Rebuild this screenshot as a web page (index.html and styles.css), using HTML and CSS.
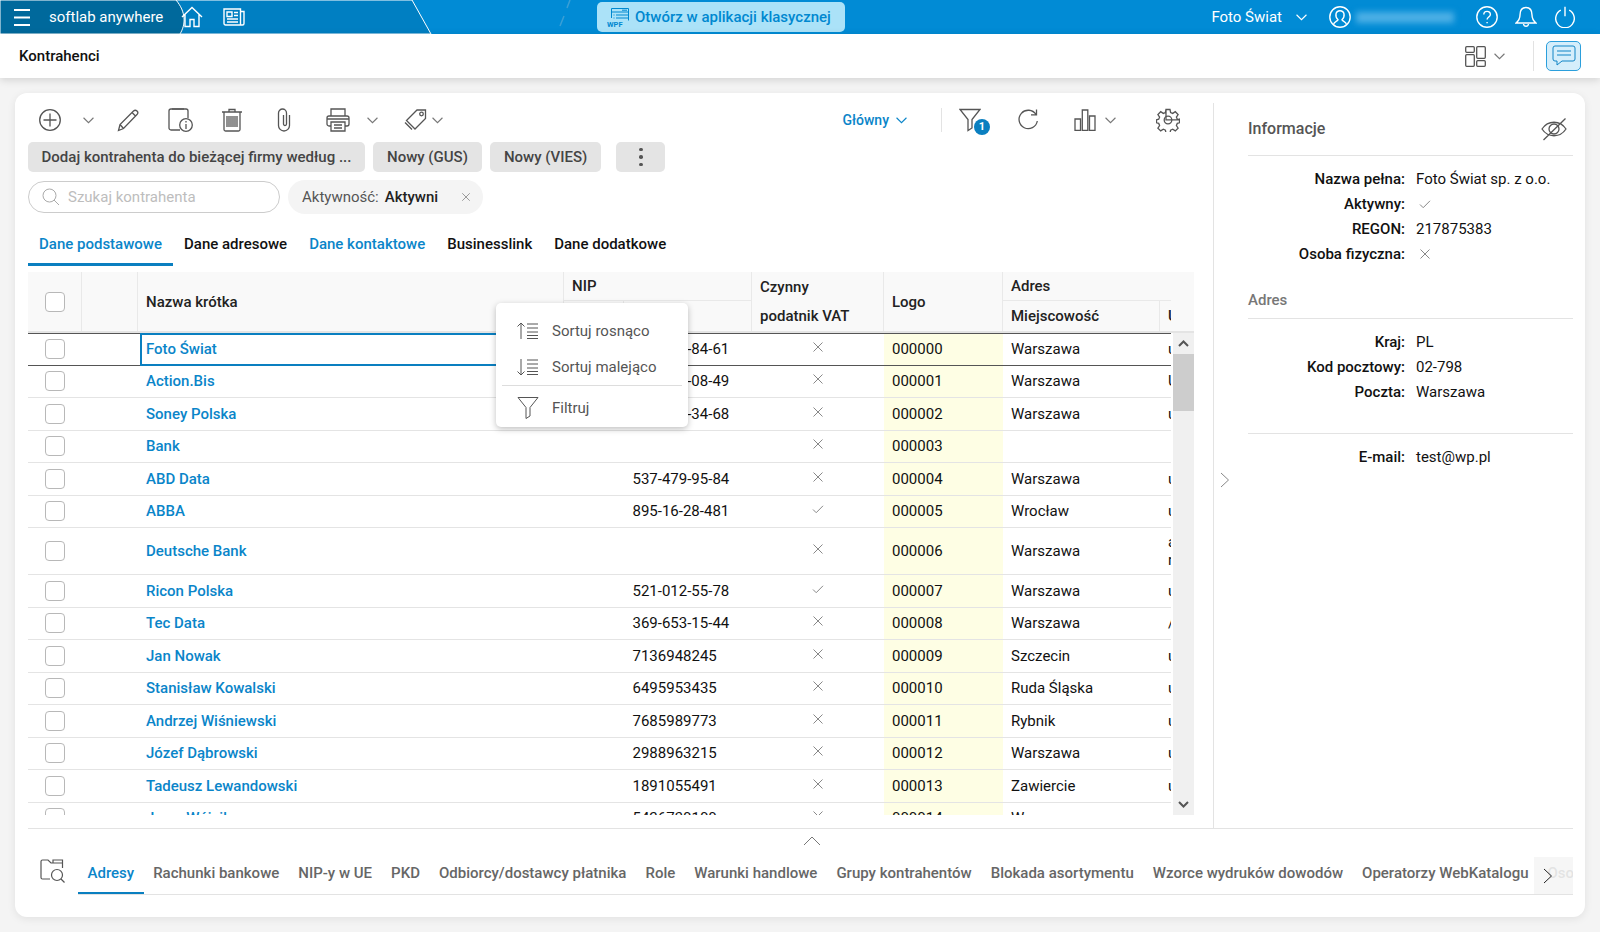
FILE: index.html
```html
<!DOCTYPE html>
<html lang="pl">
<head>
<meta charset="utf-8">
<title>Kontrahenci</title>
<link rel="stylesheet" href="styles.css">
</head>
<body>
<svg class="sprite" width="0" height="0" aria-hidden="true">
  <symbol id="x" viewBox="0 0 12 12"><path d="M1.5 1.5l9 9M10.5 1.5l-9 9"/></symbol>
  <symbol id="v" viewBox="0 0 12 12"><path d="M1 6.5l3.2 3.2L11 2.8"/></symbol>
  <symbol id="chev" viewBox="0 0 10 6"><path d="M.5.5L5 5 9.5.5"/></symbol>
  <symbol id="filter" viewBox="0 0 22 24"><path d="M1 1.5h20l-8 10v8.5l-4 2.5v-11z"/></symbol>
</svg>

<header class="topbar">
  <svg class="topbar-bg" width="600" height="34" viewBox="0 0 600 34" aria-hidden="true">
    <path fill="#007fc2" d="M0 0H412L431 34H0z"/>
    <path fill="#00699c" d="M0 0H176C186 12 186 24 180 34H0z"/>
    <path fill="none" stroke="#3a9fd6" stroke-width="1.5" d="M570 0l-3 8M564 16l-4 10"/>
  </svg>
  <div class="tb-left">
    <svg class="ic-burger" width="16" height="17" viewBox="0 0 16 17"><path d="M0 1h16M0 8.500h16M0 16h16"/></svg>
    <span class="brand">softlab anywhere</span>
    <svg class="ic-wh ic-home" width="22" height="22" viewBox="0 0 22 22"><path d="M1 11L11 1.500 21 11M4 8.500V20.500H9V13.500H13V20.500H18V8.500"/></svg>
    <svg class="ic-wh ic-news" width="22" height="18" viewBox="0 0 22 18"><path d="M1 1h16.500v16H2.500A1.500 1.500 0 0 1 1 15.500zM17.500 3.500H21V15.500A1.500 1.500 0 0 1 19.500 17H17.500M4 4h5v4.500H4zM11 4.500h4M11 7.500h4M4 11h11M4 14h11"/></svg>
  </div>
  <button class="classic">
    <svg width="23" height="20" viewBox="0 0 23 20"><path class="wpf-line" d="M4.500 11V1.500h17V13.500M4.500 5h17M15 3.200h5M9 8h12M9 11h12M6.500 8h1M6.500 11h1"/><text x="0" y="19.500" class="wpf-text">WPF</text></svg>
    <span>Otwórz w aplikacji klasycznej</span>
  </button>
  <div class="tb-right">
    <span class="firm">Foto Świat</span>
    <svg class="ic-chev-w" width="11" height="7"><use href="#chev"/></svg>
    <svg class="ic-wh ic-user" width="22" height="22" viewBox="0 0 22 22"><circle cx="11" cy="11" r="10.200"/><path d="M4.500 18.500c.5-3 4-3 4.500-4.800-3.500-3.500-2.500-9 2-9s5.500 5.500 2 9c.5 1.800 4 1.800 4.500 4.800"/></svg>
    <span class="blurred"></span>
    <svg class="ic-wh ic-help" width="22" height="22" viewBox="0 0 22 22"><circle cx="11" cy="11" r="10.200"/><path d="M7.800 8.500c0-4.200 6.600-4.200 6.600 0 0 2.500-3.300 2.500-3.300 5M11.100 16v1.200"/></svg>
    <svg class="ic-wh ic-bell" width="22" height="22" viewBox="0 0 22 22"><path d="M11 1.500c-4.500 0-6 3.500-6 7.500 0 4-1.500 6-4 8h20c-2.500-2-4-4-4-8 0-4-1.500-7.500-6-7.500zM8.500 18c.5 3 4.500 3 5 0"/></svg>
    <svg class="ic-wh ic-power" width="20" height="22" viewBox="0 0 20 22"><path d="M5.800 4.200a9.300 9.300 0 1 0 8.400 0M10 .8v9.500"/></svg>
  </div>
</header>

<div class="subbar">
  <h1 class="page-title">Kontrahenci</h1>
  <div class="sub-right">
    <svg class="ic ic-layout" width="21" height="21" viewBox="0 0 21 21"><rect x=".7" y=".7" width="8.600" height="5.600" rx="1"/><rect x=".7" y="8.700" width="8.600" height="11.600" rx="1"/><rect x="11.700" y=".7" width="8.600" height="11.600" rx="1"/><rect x="11.700" y="14.700" width="8.600" height="5.600" rx="1"/></svg>
    <svg class="ic-chev ml8" width="11" height="7"><use href="#chev"/></svg>
    <span class="sub-sep"></span>
    <button class="chat-btn" aria-label="Czat">
      <svg width="24" height="22" viewBox="0 0 24 22"><path d="M3 1h18a2 2 0 0 1 2 2v11a2 2 0 0 1-2 2H10l-5 4v-4H3a2 2 0 0 1-2-2V3a2 2 0 0 1 2-2zM5 6h14M5 10h14"/></svg>
    </button>
  </div>
</div>

<main class="card">
  <div class="card-main">
    <section class="list-pane">
      <div class="toolbar">
        <div class="tools-left">
          <svg class="ic" width="22" height="22" viewBox="0 0 22 22"><circle cx="11" cy="11" r="10.300"/><path d="M11 4.500v13M4.500 11h13"/></svg>
          <svg class="ic-chev" width="11" height="7"><use href="#chev"/></svg>
          <svg class="ic" width="22" height="23" viewBox="0 0 22 23"><path d="M1.500 21.500l1.500-6L16.500 2c1-1 2.500-1 3.500 0s1 2.500 0 3.500L6.500 19.500zM3 15.500l3.500 4M15 3.500l4 4"/></svg>
          <svg class="ic" width="25" height="24" viewBox="0 0 25 24"><path d="M12 22H3a2 2 0 0 1-2-2V3a2 2 0 0 1 2-2h15a2 2 0 0 1 2 2v7"/><path class="ic-blue" d="M4 1h12"/><circle cx="18" cy="17" r="6.300"/><path d="M18 16v5M18 13v1.500"/></svg>
          <svg class="ic" width="22" height="24" viewBox="0 0 22 24"><path d="M1 4h20M8 4V1.500h6V4M3 4v17.500A1.500 1.500 0 0 0 4.500 23h13a1.500 1.500 0 0 0 1.500-1.500V4M6 8v11M8 8v11M10 8v11M12 8v11M14 8v11M16 8v11"/></svg>
          <svg class="ic" width="14" height="24" viewBox="0 0 14 24"><path d="M12.500 7v10.500a5.500 5.500 0 0 1-11 0V5a4 4 0 0 1 8 0v11a1.500 1.500 0 0 1-3 0V7"/></svg>
          <svg class="ic" width="24" height="24" viewBox="0 0 24 24"><path d="M5 8V1h14v7M5 18H3a2 2 0 0 1-2-2v-6a2 2 0 0 1 2-2h18a2 2 0 0 1 2 2v6a2 2 0 0 1-2 2h-2M5 14h14v9H5zM8 17h8M8 20h8M1 11h22"/></svg>
          <svg class="ic-chev" width="11" height="7"><use href="#chev"/></svg>
          <svg class="ic ic-end" width="23" height="22" viewBox="0 0 23 22"><path d="M13 1h8.500v8.500L11 20 2.500 11.500zM1 13.500l7 7"/><circle cx="17.500" cy="5" r="1.800"/></svg>
          <svg class="ic-chev" width="11" height="7"><use href="#chev"/></svg>
        </div>
        <div class="tools-right">
          <span class="view-name">Główny</span>
          <svg class="ic-chev-blue ml7" width="11" height="7"><use href="#chev"/></svg>
          <span class="tool-sep"></span>
          <span class="filter-wrap">
            <svg class="ic ic-filter" width="22" height="24"><use href="#filter"/></svg>
            <span class="badge">1</span>
          </span>
          <svg class="ic ml34" width="22" height="22" viewBox="0 0 22 22"><path d="M19 5.500A9.200 9.200 0 1 0 20.300 12M14 5.800h5.500V.5"/></svg>
          <svg class="ic ml35" width="22" height="22" viewBox="0 0 22 22"><path d="M1 10h5.500v11.500H1zM8.300 1h5.500v20.500H8.300zM15.500 7H21v14.500h-5.500z"/></svg>
          <svg class="ic-chev ml9" width="11" height="7"><use href="#chev"/></svg>
          <svg class="ic ml40" width="24" height="24" viewBox="0 0 24 24"><circle cx="12" cy="12" r="3.800"/><path d="M10 1.500h4l.6 3 2.100.9 2.600-1.700 2.800 2.800-1.700 2.600.9 2.100 3 .6v0H10zM10 1.500l-.6 3-2.100.9-2.600-1.700-2.800 2.800 1.700 2.600-.9 2.100-2.200.6v3l2.200.6.9 2.100-1.700 2.600 2.800 2.800 2.600-1.700 2.100.9.600 3h4l.6-3 2.100-.9 2.600 1.700 2.800-2.800-1.700-2.600.9-2.100 2.200-.6V10.500" class="gear-fix"/></svg>
        </div>
      </div>

      <div class="actions">
        <button class="btn btn-wide">Dodaj kontrahenta do bieżącej firmy według ...</button>
        <button class="btn">Nowy (GUS)</button>
        <button class="btn">Nowy (VIES)</button>
        <button class="btn btn-more" aria-label="Więcej"><span></span><span></span><span></span></button>
      </div>

      <div class="search-row">
        <div class="search">
          <svg width="18" height="18" viewBox="0 0 18 18"><circle cx="7.500" cy="7.500" r="6.500"/><path d="M12 12l5 5"/></svg>
          <span>Szukaj kontrahenta</span>
        </div>
        <div class="chip">
          <span class="chip-label">Aktywność:</span>
          <strong>Aktywni</strong>
          <svg class="sv-x" width="10" height="10"><use href="#x"/></svg>
        </div>
      </div>

      <nav class="tabs">
        <a class="tab tab-on">Dane podstawowe</a>
        <a class="tab">Dane adresowe</a>
        <a class="tab tab-link">Dane kontaktowe</a>
        <a class="tab">Businesslink</a>
        <a class="tab">Dane dodatkowe</a>
      </nav>

      <div class="grid">
        <div class="ghead">
          <div class="gh gh-check"><span class="cb"></span></div>
          <div class="gh gh-blank"></div>
          <div class="gh gh-name">Nazwa krótka</div>
          <div class="gh gh-nip">NIP</div>
          <div class="gh gh-nip1"></div>
          <div class="gh gh-nip2"></div>
          <div class="gh gh-vat"><span>Czynny</span><span>podatnik VAT</span></div>
          <div class="gh gh-logo">Logo</div>
          <div class="gh gh-addr">Adres</div>
          <div class="gh gh-city">Miejscowość</div>
          <div class="gh gh-street">Ulica</div>
        </div>
        <div class="gbody">
          <div class="rows">
            <div class="row row-sel"><div class="c-check"><span class="cb"></span></div><div></div><div class="c-name c-focus">Foto Świat</div><div class="c-nip">521-301-84-61</div><div class="c-flag"><svg class="sv-x"><use href="#x"/></svg></div><div class="c-logo">000000</div><div class="c-city">Warszawa</div><div class="c-street">ul. Puławska</div></div>
            <div class="row"><div class="c-check"><span class="cb"></span></div><div></div><div class="c-name">Action.Bis</div><div class="c-nip">526-104-08-49</div><div class="c-flag"><svg class="sv-x"><use href="#x"/></svg></div><div class="c-logo">000001</div><div class="c-city">Warszawa</div><div class="c-street">Ul. Jana</div></div>
            <div class="row"><div class="c-check"><span class="cb"></span></div><div></div><div class="c-name">Soney Polska</div><div class="c-nip">527-020-34-68</div><div class="c-flag"><svg class="sv-x"><use href="#x"/></svg></div><div class="c-logo">000002</div><div class="c-city">Warszawa</div><div class="c-street">ul. Wołoska</div></div>
            <div class="row"><div class="c-check"><span class="cb"></span></div><div></div><div class="c-name">Bank</div><div class="c-nip"></div><div class="c-flag"><svg class="sv-x"><use href="#x"/></svg></div><div class="c-logo">000003</div><div class="c-city"></div><div class="c-street"></div></div>
            <div class="row"><div class="c-check"><span class="cb"></span></div><div></div><div class="c-name">ABD Data</div><div class="c-nip">537-479-95-84</div><div class="c-flag"><svg class="sv-x"><use href="#x"/></svg></div><div class="c-logo">000004</div><div class="c-city">Warszawa</div><div class="c-street">ul. Polna</div></div>
            <div class="row"><div class="c-check"><span class="cb"></span></div><div></div><div class="c-name">ABBA</div><div class="c-nip">895-16-28-481</div><div class="c-flag"><svg class="sv-v"><use href="#v"/></svg></div><div class="c-logo">000005</div><div class="c-city">Wrocław</div><div class="c-street">ul. Legnicka</div></div>
            <div class="row row-tall"><div class="c-check"><span class="cb"></span></div><div></div><div class="c-name">Deutsche Bank</div><div class="c-nip"></div><div class="c-flag"><svg class="sv-x"><use href="#x"/></svg></div><div class="c-logo">000006</div><div class="c-city">Warszawa</div><div class="c-street">al. Armii<br>róg Nowej</div></div>
            <div class="row"><div class="c-check"><span class="cb"></span></div><div></div><div class="c-name">Ricon Polska</div><div class="c-nip">521-012-55-78</div><div class="c-flag"><svg class="sv-v"><use href="#v"/></svg></div><div class="c-logo">000007</div><div class="c-city">Warszawa</div><div class="c-street">ul. Nowa</div></div>
            <div class="row"><div class="c-check"><span class="cb"></span></div><div></div><div class="c-name">Tec Data</div><div class="c-nip">369-653-15-44</div><div class="c-flag"><svg class="sv-x"><use href="#x"/></svg></div><div class="c-logo">000008</div><div class="c-city">Warszawa</div><div class="c-street">/ Lipowa</div></div>
            <div class="row"><div class="c-check"><span class="cb"></span></div><div></div><div class="c-name">Jan Nowak</div><div class="c-nip">7136948245</div><div class="c-flag"><svg class="sv-x"><use href="#x"/></svg></div><div class="c-logo">000009</div><div class="c-city">Szczecin</div><div class="c-street">ul. Długa</div></div>
            <div class="row"><div class="c-check"><span class="cb"></span></div><div></div><div class="c-name">Stanisław Kowalski</div><div class="c-nip">6495953435</div><div class="c-flag"><svg class="sv-x"><use href="#x"/></svg></div><div class="c-logo">000010</div><div class="c-city">Ruda Śląska</div><div class="c-street">ul. Górna</div></div>
            <div class="row"><div class="c-check"><span class="cb"></span></div><div></div><div class="c-name">Andrzej Wiśniewski</div><div class="c-nip">7685989773</div><div class="c-flag"><svg class="sv-x"><use href="#x"/></svg></div><div class="c-logo">000011</div><div class="c-city">Rybnik</div><div class="c-street">ul. Krótka</div></div>
            <div class="row"><div class="c-check"><span class="cb"></span></div><div></div><div class="c-name">Józef Dąbrowski</div><div class="c-nip">2988963215</div><div class="c-flag"><svg class="sv-x"><use href="#x"/></svg></div><div class="c-logo">000012</div><div class="c-city">Warszawa</div><div class="c-street">ul. Leśna</div></div>
            <div class="row"><div class="c-check"><span class="cb"></span></div><div></div><div class="c-name">Tadeusz Lewandowski</div><div class="c-nip">1891055491</div><div class="c-flag"><svg class="sv-x"><use href="#x"/></svg></div><div class="c-logo">000013</div><div class="c-city">Zawiercie</div><div class="c-street">ul. Polna</div></div>
            <div class="row"><div class="c-check"><span class="cb"></span></div><div></div><div class="c-name">Jerzy Wójcik</div><div class="c-nip">5426730100</div><div class="c-flag"><svg class="sv-x"><use href="#x"/></svg></div><div class="c-logo">000014</div><div class="c-city">Warszawa</div><div class="c-street">ul. Mała</div></div>
          </div>
          <div class="scrollbar">
            <svg class="sb-arrow" width="11" height="7" viewBox="0 0 11 7"><path d="M1 6l4.500-4.500L10 6"/></svg>
            <span class="sb-thumb"></span>
            <svg class="sb-arrow sb-down" width="11" height="7" viewBox="0 0 11 7"><path d="M1 1l4.500 4.500L10 1"/></svg>
          </div>
        </div>
      </div>

      <div class="menu">
        <div class="menu-item">
          <svg width="22" height="18" viewBox="0 0 22 18"><path d="M4 17V1M.5 4.500L4 1l3.500 3.500M10 2h11M10 6h11M10 10h11M10 13.500h11M10 16.500h11"/></svg>
          <span>Sortuj rosnąco</span>
        </div>
        <div class="menu-item">
          <svg width="22" height="18" viewBox="0 0 22 18"><path d="M4 1v16M.5 13.500L4 17l3.500-3.500M10 2h11M10 6h11M10 10h11M10 13.500h11M10 16.500h11"/></svg>
          <span>Sortuj malejąco</span>
        </div>
        <div class="menu-sep"></div>
        <div class="menu-item">
          <svg width="22" height="24" viewBox="0 0 22 24"><use href="#filter"/></svg>
          <span>Filtruj</span>
        </div>
      </div>
    </section>

    <aside class="info-pane">
      <svg class="pane-toggle" width="10" height="16" viewBox="0 0 10 16"><path d="M1 1l7.500 7L1 15"/></svg>
      <div class="info-head">
        <h2>Informacje</h2>
        <svg class="ic" width="26" height="24" viewBox="0 0 26 24"><path d="M1 12c6-9 18-9 24 0-6 9-18 9-24 0zM24.500 1.500L2.500 23"/><circle cx="13" cy="12" r="5"/></svg>
      </div>
      <dl class="info-list">
        <dt>Nazwa pełna:</dt><dd>Foto Świat sp. z o.o.</dd>
        <dt>Aktywny:</dt><dd><svg class="sv-v"><use href="#v"/></svg></dd>
        <dt>REGON:</dt><dd>217875383</dd>
        <dt>Osoba fizyczna:</dt><dd><svg class="sv-x"><use href="#x"/></svg></dd>
      </dl>
      <h3 class="info-sub">Adres</h3>
      <dl class="info-list">
        <dt>Kraj:</dt><dd>PL</dd>
        <dt>Kod pocztowy:</dt><dd>02-798</dd>
        <dt>Poczta:</dt><dd>Warszawa</dd>
      </dl>
      <div class="info-rule"></div>
      <dl class="info-list">
        <dt>E-mail:</dt><dd>test@wp.pl</dd>
      </dl>
    </aside>
  </div>

  <div class="bottom">
    <svg class="collapse" width="18" height="10" viewBox="0 0 18 10"><path d="M1 9l8-8 8 8"/></svg>
    <div class="bottom-row">
      <svg class="ic ic-folder" width="25" height="24" viewBox="0 0 25 24"><path d="M10 20H2.500A1.500 1.500 0 0 1 1 18.500V2.500A1.500 1.500 0 0 1 2.500 1H8l3 3h11.500v5M13 4V1h9.500v3"/><circle cx="17" cy="16" r="5.500"/><path d="M21 20l3.500 3.500"/></svg>
      <div class="btabs">
        <a class="btab btab-on">Adresy</a>
        <a class="btab">Rachunki bankowe</a>
        <a class="btab">NIP-y w UE</a>
        <a class="btab">PKD</a>
        <a class="btab">Odbiorcy/dostawcy płatnika</a>
        <a class="btab">Role</a>
        <a class="btab">Warunki handlowe</a>
        <a class="btab">Grupy kontrahentów</a>
        <a class="btab">Blokada asortymentu</a>
        <a class="btab">Wzorce wydruków dowodów</a>
        <a class="btab">Operatorzy WebKatalogu</a>
        <a class="btab">Osoby</a>
        <span class="btabs-next"><svg width="10" height="16" viewBox="0 0 10 16"><path d="M1 1l7.500 7L1 15"/></svg></span>
      </div>
    </div>
  </div>
</main>
</body>
</html>
```
FILE: styles.css
```css
* { box-sizing: border-box; }
html, body { margin: 0; height: 932px; overflow: hidden; }
body { background: #f4f4f4; font: 15px/1.2 Roboto, "Liberation Sans", sans-serif; color: #111; }
button { font: inherit; border: 0; padding: 0; }
h1, h2, h3, dl, dd { margin: 0; }
.sprite { position: absolute; }
svg { fill: none; stroke: currentColor; flex: none; display: block; }

/* top bar */
.topbar { position: relative; height: 34px; background: #018bd5; color: #fff; display: flex; align-items: center; }
.topbar-bg { position: absolute; left: 0; top: 0; }
.tb-left, .classic, .tb-right { position: relative; }
.tb-left { display: flex; align-items: center; width: 597px; padding-left: 14px; }
.ic-burger { stroke: #fff; stroke-width: 2; }
.brand { margin-left: 19px; font-size: 15px; width: 132px; }
.ic-wh { stroke: #fff; stroke-width: 1.400; }
.ic-news { margin-left: 20px; }
.classic { width: 248px; height: 30px; border-radius: 5px; background: #abe2f8; color: #0088d0; font-weight: 500; display: flex; align-items: center; padding-left: 10px; gap: 5px; }
.wpf-line { stroke: #0088d0; stroke-width: 1; }
.wpf-text { font: 700 7.500px Roboto, sans-serif; fill: #0088d0; stroke: none; }
.tb-right { display: flex; align-items: center; margin-left: auto; padding-right: 25px; }
.firm { font-size: 15px; }
.ic-chev-w { stroke: #fff; margin-left: 14px; }
.ic-user { margin-left: 22px; }
.blurred { width: 98px; height: 11px; margin: 0 22px 0 5px; background: #4db0e6; filter: blur(3px); }
.ic-bell { margin-left: 17px; }
.ic-power { margin-left: 18px; }

/* sub bar */
.subbar { position: relative; height: 44px; background: #fff; box-shadow: 0 2px 8px rgba(0,0,0,.14); display: flex; align-items: center; padding: 0 19px; }
.page-title { font-size: 15px; font-weight: 500; color: #111; }
.sub-right { margin-left: auto; display: flex; align-items: center; }
.sub-sep { width: 1px; height: 30px; background: #e2e2e2; margin: 0 12px 0 28px; }
.chat-btn { width: 35px; height: 30px; border: 1px solid #2b9fdc; border-radius: 5px; background: #d5eefb; display: flex; align-items: center; justify-content: center; color: #1185c6; margin-right: 0; }
.ic { stroke: #555; stroke-width: 1.300; }
.ic-chev { stroke: #777; }
.ic-chev-blue { stroke: #0a85c9; }
.ml7 { margin-left: 7px; }
.ml8 { margin-left: 8px; }
.ml9 { margin-left: 9px; }
.ml34 { margin-left: 34px; }
.ml35 { margin-left: 35px; }
.ml40 { margin-left: 40px; }

/* card */
.card { margin: 15px 15px 15px 15px; height: 824px; background: #fff; border-radius: 12px; box-shadow: 0 2px 8px rgba(0,0,0,.08); padding: 10px 12px 0 13px; }
.card-main { display: flex; height: 726px; border-bottom: 1px solid #e3e3e3; }
.list-pane { position: relative; width: 1186px; flex: none; padding-right: 20px; border-right: 1px solid #e3e3e3; }

.toolbar { height: 34px; display: flex; align-items: center; justify-content: space-between; padding-right: 13px; }
.tools-left { display: grid; grid-template-columns: 44px 32px 48px 56px 48px 56px 52px 16px 47px 20px; justify-items: center; align-items: center; }
.ic-end { justify-self: end; }
.tools-right { display: flex; align-items: center; }
.view-name { color: #0a85c9; font-weight: 500; font-size: 14px; }
.tool-sep { width: 1px; height: 24px; background: #e3e3e3; margin: 0 17px 0 34px; }
.filter-wrap { position: relative; display: block; width: 24px; height: 24px; }
.badge { position: absolute; left: 15px; top: 11px; width: 16px; height: 16px; border-radius: 50%; background: #0a7fc0; color: #fff; font-size: 11px; font-weight: 700; line-height: 16px; text-align: center; }

.actions { display: flex; gap: 8px; margin-top: 5px; }
.btn { height: 30px; padding: 0 14px; background: #e4e4e4; color: #444; border-radius: 5px; font-weight: 500; font-size: 15px; }
.btn-wide { width: 337px; padding: 0; }
.btn-more { width: 49px; margin-left: 7px; padding: 0; display: flex; flex-direction: column; align-items: center; justify-content: center; gap: 4px; }
.btn-more span { width: 3.500px; height: 3.500px; border-radius: 50%; background: #555; }

.search-row { display: flex; align-items: center; gap: 8px; margin-top: 8px; height: 34px; }
.search { width: 252px; height: 32px; border: 1px solid #ccc; border-radius: 16px; display: flex; align-items: center; padding-left: 13px; gap: 8px; color: #bdbdbd; }
.search svg { stroke: #aaa; }
.chip { width: 195px; height: 34px; border-radius: 17px; background: #f4f4f4; display: flex; align-items: center; padding-left: 14px; color: #555; }
.chip strong { margin-left: 6px; font-weight: 500; color: #222; }
.chip .sv-x { margin-left: 23px; width: 10px; height: 10px; }

.tabs { display: flex; height: 37px; margin-top: 15px; }
.tab { padding: 6px 11px 0; font-weight: 500; color: #111; height: 37px; }
.tab-on { color: #0a85c9; border-bottom: 3px solid #0a7fc0; }
.tab-link { color: #0a85c9; }

.grid { margin-top: 6px; width: 1166px; }
.ghead { display: grid; grid-template-columns: 54px 56px 426px 60px 128px 132px 119px 157px 11px; grid-template-rows: 29px 30px; height: 61px; background: #f9f9f9; border-bottom: 2px solid #e4e4e4; width: 1166px; overflow: hidden; font-weight: 500; color: #222; position: relative; }
.gh { display: flex; align-items: center; padding-left: 8px; border-right: 1px solid #e9e9e9; white-space: nowrap; overflow: hidden; }
.gh-check { grid-row: 1 / 3; padding: 0; justify-content: center; border-right: 1px solid #e9e9e9; }
.gh-blank { grid-row: 1 / 3; }
.gh-name { grid-row: 1 / 3; }
.gh-nip { grid-column: 4 / 6; border-bottom: 1px solid #e9e9e9; }
.gh-nip1 { grid-column: 4; grid-row: 2; }
.gh-nip2 { grid-column: 5; grid-row: 2; }
.gh-vat { grid-column: 6; grid-row: 1 / 3; flex-direction: column; align-items: flex-start; justify-content: center; line-height: 29px; }
.gh-logo { grid-column: 7; grid-row: 1 / 3; }
.gh-addr { grid-column: 8 / 10; grid-row: 1; border-bottom: 1px solid #e9e9e9; border-right: 0; }
.gh-city { grid-column: 8; grid-row: 2; }
.gh-street { grid-column: 9; grid-row: 2; border-right: 0; }

.gbody { display: flex; height: 482px; overflow: hidden; justify-content: space-between; }
.rows { width: 1143px; overflow: hidden; }
.row { display: grid; grid-template-columns: 54px 56px 426px 188px 132px 119px 157px 11px; height: 32.500px; border-bottom: 1px solid #e4e4e4; align-items: center; }
.row > div { height: 100%; display: flex; align-items: center; min-width: 0; white-space: nowrap; overflow: hidden; }
.row-tall { height: 47px; }
.row-sel { border-top: 1px solid #555; border-bottom: 1px solid #555; }
.c-check { justify-content: center; }
.c-name { padding-left: 8px; color: #0a85c9; font-weight: 500; }
.row .c-focus { box-shadow: inset 0 0 0 2px #0a7fc0; margin: -1px 0 -1px 2px; height: calc(100% + 2px); padding-left: 6px; }
.c-nip { padding-left: 68.500px; }
.c-flag { justify-content: center; padding-bottom: 4px; }
.c-logo { background: #fefee4; padding-left: 8px; }
.c-city { padding-left: 8px; }
.c-street { padding-left: 8px; line-height: 18px; }
.cb { display: block; width: 20px; height: 20px; border: 1px solid #b8b8b8; border-radius: 4px; background: #fff; }
.sv-x, .sv-v { width: 12px; height: 12px; stroke: #888; stroke-width: 1; }

.scrollbar { width: 21px; background: #f0f0f0; display: flex; flex-direction: column; align-items: center; }
.sb-arrow { stroke: #555; stroke-width: 2; margin: 7px 0; height: 7px; }
.sb-thumb { align-self: stretch; height: 57px; background: #cdcdcd; }
.sb-down { margin-top: auto; }

.menu { position: absolute; left: 468px; top: 200px; width: 192px; height: 124px; background: #fff; border-radius: 5px; box-shadow: 0 2px 6px rgba(0,0,0,.25); padding-top: 10px; color: #555; }
.menu-item { height: 36px; display: flex; align-items: center; padding-left: 21px; gap: 13px; }
.menu-item svg { stroke: #555; stroke-width: 1; }
.menu-sep { height: 1px; margin: 0 6px; background: #ddd; }
.menu-sep + .menu-item { height: 44px; }

/* info pane */
.info-pane { position: relative; flex: 1; padding-left: 34px; }
.pane-toggle { position: absolute; left: 6px; top: 369px; stroke: #888; }
.info-head { display: flex; align-items: center; justify-content: space-between; height: 53px; border-bottom: 1px solid #e3e3e3; padding-right: 6px; }
.info-head h2 { font-size: 16px; font-weight: 500; color: #555; }
.info-list { display: grid; grid-template-columns: 157px 1fr; column-gap: 11px; grid-auto-rows: 25px; align-items: center; margin-top: 10px; }
.info-list dt { text-align: right; font-weight: 500; }
.info-list dd svg { margin-left: 3px; }
.info-sub { font-size: 15px; font-weight: 500; color: #777; height: 36px; margin-top: 17px; padding-top: 8px; border-bottom: 1px solid #e3e3e3; }
.info-rule { height: 1px; background: #e3e3e3; margin-top: 29px; }

/* bottom */
.bottom { height: 88px; }
.collapse { stroke: #777; margin: 7px auto 0 775px; }
.bottom-row { display: flex; align-items: flex-start; margin-top: 11px; }
.ic-folder { margin: 2px 13px 0 12px; stroke-width: 1.200; }
.btabs { position: relative; flex: 1; display: flex; height: 38px; border-bottom: 1px solid #e3e3e3; overflow: hidden; white-space: nowrap; }
.btab { padding: 7px 9.500px 0; font-weight: 500; color: #666; height: 38px; flex: none; }
.btab-on { color: #0a85c9; border-bottom: 3px solid #0a7fc0; margin-right: 0; }
.btabs-next { position: absolute; right: 0; top: 0; width: 39px; height: 38px; background: rgba(245,245,245,.88); display: flex; align-items: center; padding-left: 9px; color: #222; }
```
